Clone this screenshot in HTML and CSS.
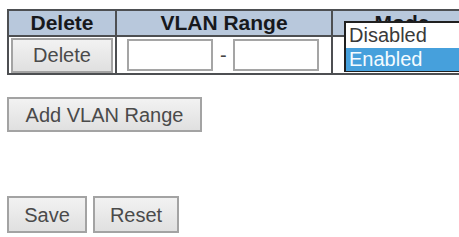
FILE: index.html
```html
<!DOCTYPE html>
<html>
<head>
<meta charset="utf-8">
<link rel="stylesheet" href="styles.css">
</head>
<body>
<div class="page">
  <table class="grid">
    <thead>
      <tr>
        <th class="c-del">Delete</th>
        <th class="c-range">VLAN Range</th>
        <th class="c-mode">Mode</th>
      </tr>
    </thead>
    <tbody>
      <tr>
        <td class="c-del"><button class="btn btn-del">Delete</button></td>
        <td class="c-range">
          <div class="range">
            <input class="field" type="text">
            <span class="dash">-</span>
            <input class="field" type="text">
          </div>
        </td>
        <td class="c-mode"></td>
      </tr>
    </tbody>
  </table>
  <div class="add-row"><button class="btn btn-add">Add VLAN Range</button></div>
  <div class="actions">
    <button class="btn btn-save">Save</button>
    <button class="btn btn-reset">Reset</button>
  </div>
  <div class="dropdown">
    <div class="opt">Disabled</div>
    <div class="opt sel">Enabled</div>
  </div>
</div>
</body>
</html>
```
FILE: styles.css
```css
html, body {
  margin: 0;
  padding: 0;
  background: #fff;
  overflow: hidden;
}
body {
  font-family: "Liberation Sans", Arial, sans-serif;
  width: 459px;
  height: 237px;
}
.page {
  position: relative;
  padding: 9px 0 0 7px;
}
.grid {
  border-collapse: collapse;
  table-layout: fixed;
  width: 464px;
}
.grid th, .grid td {
  border: 2px solid #4d4f52;
  padding: 0;
}
.grid th {
  background: #b8c8dc;
  color: #17191c;
  font-size: 21px;
  font-weight: bold;
  height: 24px;
  line-height: 24px;
  text-align: center;
}
.grid td {
  height: 36px;
  background: #fff;
}
.c-del { width: 106px; text-align: center; }
.c-range { width: 214px; }
.c-mode { width: 138px; }
.btn {
  font-family: "Liberation Sans", Arial, sans-serif;
  font-size: 20px;
  color: #4a4a4a;
  background: linear-gradient(#f2f2f2, #e0e0e0);
  border: 2px solid #a3a3a3;
  height: 35px;
  padding: 0 16px;
  margin: 0;
  line-height: 30px;
}
.btn-del {
  width: 102px;
  padding: 0;
  vertical-align: middle;
}
.range {
  display: flex;
  align-items: center;
  padding-left: 10px;
  gap: 7px;
}
.field {
  width: 86px;
  height: 32px;
  box-sizing: border-box;
  border: 2px solid #a5a5a5;
  background: #fff;
  margin: 0;
  padding: 0;
}
.dash {
  font-size: 20px;
  color: #444;
  width: 6px;
}
.add-row {
  margin-top: 22px;
}
.btn-add {
  width: 195px;
  padding: 0;
}
.actions {
  margin-top: 64px;
  display: flex;
  gap: 6px;
}
.btn-save { width: 80px; padding: 0; height: 37px; }
.btn-reset { width: 86px; padding: 0; height: 37px; }
.dropdown {
  position: absolute;
  left: 344px;
  top: 21px;
  width: 120px;
  height: 51px;
  box-sizing: border-box;
  border: 2px solid #202020;
  background: #fff;
  padding-top: 1px;
}
.opt {
  font-size: 20px;
  line-height: 23px;
  height: 23px;
  padding-left: 3px;
  color: #3a3a3a;
}
.opt.sel {
  background: #46a0dc;
  color: #f4fbff;
  margin-top: 1px;
}
```
